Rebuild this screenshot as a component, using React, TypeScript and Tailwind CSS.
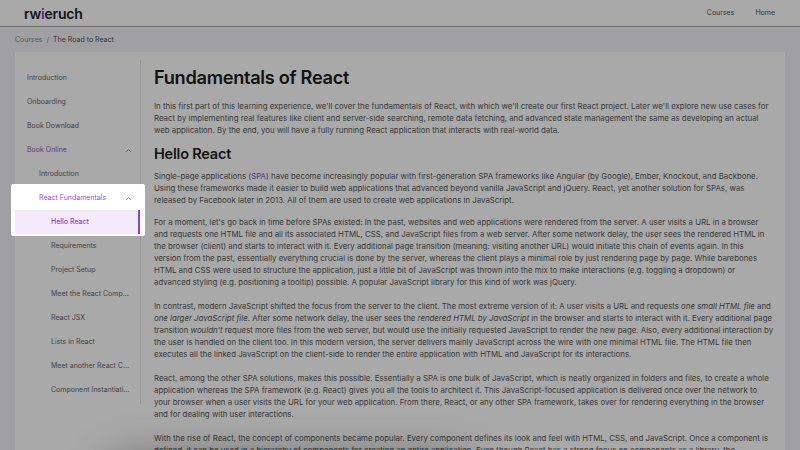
import React from 'react';

const SIDEBAR_TOP = ['Introduction', 'Onboarding', 'Book Download'];

const LESSONS = [
  'Requirements',
  'Project Setup',
  'Meet the React Comp...',
  'React JSX',
  'Lists in React',
  'Meet another React C...',
  'Component Instantiati...',
];

function Chevron() {
  return (
    <svg width="7" height="5" viewBox="0 0 7 5" className="text-[#9a9a9a]">
      <path d="M1.4 3.6 L3.5 1.5 L5.6 3.6" fill="none" stroke="currentColor" strokeWidth="1" strokeLinecap="round" />
    </svg>
  );
}

function Item({ label, indent = 0, active = false, chevron = false }: { label: string; indent?: number; active?: boolean; chevron?: boolean }) {
  const pad = indent === 0 ? 'pl-[12px]' : indent === 1 ? 'pl-[24px]' : 'pl-[36px]';
  return (
    <div className={`h-[24px] flex items-center justify-between pr-[8px] ${pad} ${active ? 'text-[#9b4fd8]' : 'text-[#666]'}`}>
      <span className="whitespace-nowrap">{label}</span>
      {chevron && <Chevron />}
    </div>
  );
}

export default function App() {
  return (
    <div className="relative h-[450px] overflow-hidden bg-[#f1f2f5] font-['Inter','Liberation_Sans',sans-serif]">
      <header className="h-[27px] bg-white border-b border-[#a0a0a0] flex items-center justify-between pl-[24px] pr-[25px]">
        <div className="pt-[2px] text-[14px] font-semibold tracking-[-0.2px] text-[#1e1e1e] leading-none">
          rw<span className="text-[#7b3fc4]">i</span>eruch
        </div>
        <nav className="flex items-center gap-[21px] text-[7px] text-[#505050]">
          <span>Courses</span>
          <span>Home</span>
        </nav>
      </header>

      <div className="px-[15px]">
        <div className="h-[25px] pt-[2px] flex items-center gap-[4px] text-[7px]">
          <span className="text-[#8a8a8a]">Courses</span>
          <span className="text-[#8a8a8a]">/</span>
          <span className="text-[#505050]">The Road to React</span>
        </div>

        <div className="bg-white flex pt-[8px]">
          <aside className="w-[126px] shrink-0 self-start border-r border-[#e4e4e4] pt-[6px] pb-[2px] text-[7px]">
            {SIDEBAR_TOP.map((l) => (
              <Item key={l} label={l} />
            ))}
            <Item label="Book Online" active chevron />
            <Item label="Introduction" indent={1} />
            <div className="relative">
              {/* tour spotlight: everything outside this box is dimmed */}
              <div className="absolute -left-[4px] -right-[5px] -top-[2px] -bottom-[2px] border-l-4 border-r-[5px] border-y-2 border-white rounded-[3px] shadow-[0_0_0_2000px_rgba(0,0,0,0.337)] z-40 pointer-events-none" />
              <Item label="React Fundamentals" indent={1} active chevron />
              <div className="h-[24px] flex items-center pl-[36px] bg-[#f5eafc] border-r-2 border-[#8d3fd0] text-[#8a3fcf] font-medium">
                Hello React
              </div>
            </div>
            {LESSONS.map((l) => (
              <Item key={l} label={l} indent={2} />
            ))}
          </aside>

          <main className="flex-1 pl-[13px] pr-[4px] text-[7.85px] leading-[12px] text-[#555]">
            <h1 className="text-[18.2px] leading-[24px] font-semibold tracking-[-0.3px] text-[#1c1c1c] mt-[5px] mb-[11px]">
              Fundamentals of React
            </h1>
            <p className="mb-[8px]">
              In this first part of this learning experience, we'll cover the fundamentals of React, with which we'll create our first React project. Later we'll explore new use cases for<br />
              React by implementing real features like client and server-side searching, remote data fetching, and advanced state management the same as developing an actual<br />
              web application. By the end, you will have a fully running React application that interacts with real-world data.
            </p>
            <h2 className="text-[14.5px] leading-[20px] font-semibold tracking-[-0.2px] text-[#1c1c1c] mb-[6px]">Hello React</h2>
            <p className="mb-[10px]">
              Single-page applications (<span className="text-[#8a3fcf]">SPA</span>) have become increasingly popular with first-generation SPA frameworks like Angular (by Google), Ember, Knockout, and Backbone.<br />
              Using these frameworks made it easier to build web applications that advanced beyond vanilla JavaScript and jQuery. React, yet another solution for SPAs, was<br />
              released by Facebook later in 2013. All of them are used to create web applications in JavaScript.
            </p>
            <p className="mb-[12px]">
              For a moment, let's go back in time before SPAs existed: In the past, websites and web applications were rendered from the server. A user visits a URL in a browser<br />
              and requests one HTML file and all its associated HTML, CSS, and JavaScript files from a web server. After some network delay, the user sees the rendered HTML in<br />
              the browser (client) and starts to interact with it. Every additional page transition (meaning: visiting another URL) would initiate this chain of events again. In this<br />
              version from the past, essentially everything crucial is done by the server, whereas the client plays a minimal role by just rendering page by page. While barebones<br />
              HTML and CSS were used to structure the application, just a little bit of JavaScript was thrown into the mix to make interactions (e.g. toggling a dropdown) or<br />
              advanced styling (e.g. positioning a tooltip) possible. A popular JavaScript library for this kind of work was jQuery.
            </p>
            <p className="mb-[12px]">
              In contrast, modern JavaScript shifted the focus from the server to the client. The most extreme version of it: A user visits a URL and requests <em>one small HTML file</em> and<br />
              <em>one larger JavaScript file</em>. After some network delay, the user sees the <em>rendered HTML by JavaScript</em> in the browser and starts to interact with it. Every additional page<br />
              transition <em>wouldn't</em> request more files from the web server, but would use the initially requested JavaScript to render the new page. Also, every additional interaction by<br />
              the user is handled on the client too. In this modern version, the server delivers mainly JavaScript across the wire with one minimal HTML file. The HTML file then<br />
              executes all the linked JavaScript on the client-side to render the entire application with HTML and JavaScript for its interactions.
            </p>
            <p className="mb-[12px]">
              React, among the other SPA solutions, makes this possible. Essentially a SPA is one bulk of JavaScript, which is neatly organized in folders and files, to create a whole<br />
              application whereas the SPA framework (e.g. React) gives you all the tools to architect it. This JavaScript-focused application is delivered once over the network to<br />
              your browser when a user visits the URL for your web application. From there, React, or any other SPA framework, takes over for rendering everything in the browser<br />
              and for dealing with user interactions.
            </p>
            <p className="mb-[12px]">
              With the rise of React, the concept of components became popular. Every component defines its look and feel with HTML, CSS, and JavaScript. Once a component is<br />
              defined, it can be used in a hierarchy of components for creating an entire application. Even though React has a strong focus on components as a library, the<br />
              surrounding ecosystem makes it a flexible framework.
            </p>
          </main>
        </div>
      </div>

      {/* shadow of the tour popover sitting below the fold */}
      <div className="absolute left-[110px] top-[462px] w-[360px] h-[120px] rounded-lg shadow-[0_0_45px_rgba(0,0,0,0.45)] z-50 pointer-events-none" />
    </div>
  );
}
